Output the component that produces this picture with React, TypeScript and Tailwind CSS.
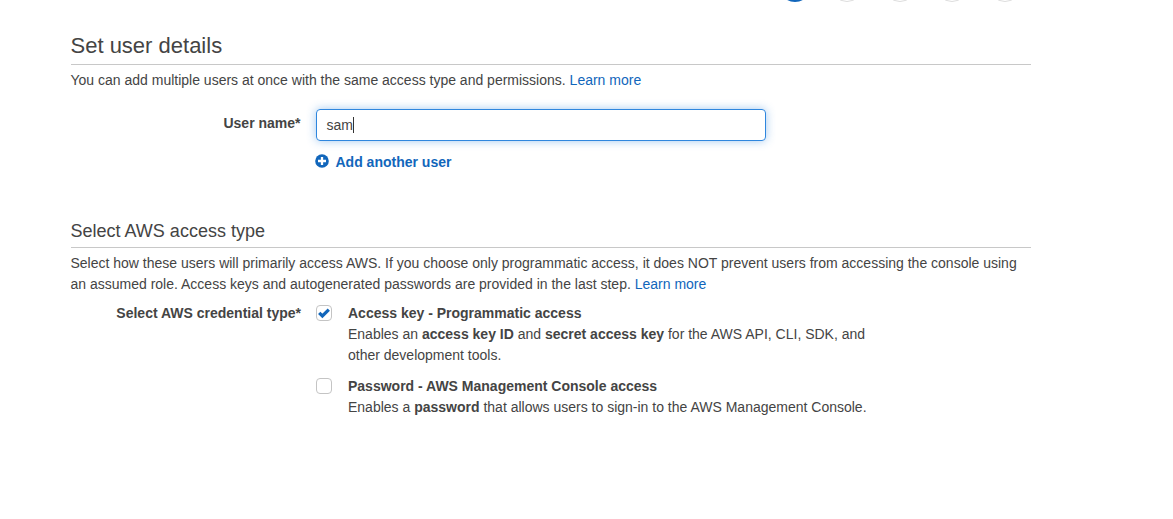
import React from "react";

const steps = [true, false, false, false, false];

function Link({ children }: { children: React.ReactNode }) {
  return <a className="text-[#1166bb]">{children}</a>;
}

export default function App() {
  return (
    <div className="h-[519px] overflow-hidden bg-white pl-[70.5px] font-['Liberation_Sans',Arial,sans-serif] text-[14px] leading-[21px] text-[#444]">
      <div className="w-[960px]">
        <div className="flex h-[2px] items-end justify-end gap-[20.5px] pr-[10px]">
          {steps.map((active, i) => (
            <div
              key={i}
              className={
                active
                  ? "size-8 shrink-0 rounded-full bg-[#1166bb]"
                  : "size-8 shrink-0 rounded-full border border-[#ddd] bg-white"
              }
            />
          ))}
        </div>

        <h1 className="mt-[26px] h-[37px] border-b border-[#c8c8c8] text-[22px] leading-[36px]">Set user details</h1>
        <p className="mt-[5px]">
          You can add multiple users at once with the same access type and permissions. <Link>Learn more</Link>
        </p>

        <div className="mt-[18px] flex">
          <label className="w-[230px] pt-[4px] text-right font-bold">User name*</label>
          <div className="ml-[15.5px] flex h-8 w-[450px] items-center rounded-[4px] border border-[#2e86de] pl-[9.5px] shadow-[0_0_10px_rgba(46,134,222,0.45)]">
            <span>sam</span>
            <span className="h-4 w-px bg-[#333]" />
          </div>
        </div>

        <div className="ml-[244.5px] mt-[11px] flex items-center gap-[6.5px] font-bold text-[#1166bb]">
          <svg className="-mt-[3px] size-[14px]" viewBox="0 0 14 14">
            <circle cx="7" cy="7" r="6.8" fill="#1166bb" />
            <path d="M7 3v8M3 7h8" stroke="#fff" strokeWidth="2.3" />
          </svg>
          <span>Add another user</span>
        </div>

        <h2 className="mt-[43px] h-[32px] border-b border-[#c8c8c8] text-[18px] leading-[30px]">Select AWS access type</h2>
        <div className="mt-[5px]">
          <p>
            Select how these users will primarily access AWS. If you choose only programmatic access, it does NOT prevent
            users from accessing the console using
          </p>
          <p>
            an assumed role. Access keys and autogenerated passwords are provided in the last step.{" "}
            <Link>Learn more</Link>
          </p>
        </div>

        <div className="mt-[8px] flex">
          <div className="w-[230.5px] text-right font-bold">Select AWS credential type*</div>
          <div className="ml-[15px] flex flex-col gap-[10px]">
            <div className="flex">
              <div className="mt-[2px] flex size-4 items-center justify-center rounded-[4px] border border-[#c4c4c4]">
                <svg className="size-[12px]" viewBox="0 0 12 12">
                  <path d="M1.2 5.8l3.2 3.2L10.8 2.6" fill="none" stroke="#1166bb" strokeWidth="3.2" />
                </svg>
              </div>
              <div className="ml-4 w-[540px]">
                <div className="font-bold">Access key - Programmatic access</div>
                <div>
                  Enables an <b>access key ID</b> and <b>secret access key</b> for the AWS API, CLI, SDK, and
                  <br />
                  other development tools.
                </div>
              </div>
            </div>
            <div className="flex">
              <div className="mt-[2px] size-4 rounded-[4px] border border-[#c4c4c4]" />
              <div className="ml-4 w-[540px]">
                <div className="font-bold">Password - AWS Management Console access</div>
                <div>
                  Enables a <b>password</b> that allows users to sign-in to the AWS Management Console.
                </div>
              </div>
            </div>
          </div>
        </div>
      </div>
    </div>
  );
}
